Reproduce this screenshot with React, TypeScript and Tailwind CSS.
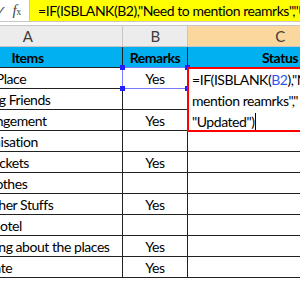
import React from 'react';

const font = { fontFamily: 'Lato, "Liberation Sans", sans-serif', letterSpacing: '-0.45px' };

const rows: { a: string; b: string }[] = [
  { a: 'Finalize the Place', b: 'Yes' },
  { a: 'Begin Inviting Friends', b: '' },
  { a: 'Money Arrangement', b: 'Yes' },
  { a: 'Travel Organisation', b: '' },
  { a: 'Book Ship Tickets', b: 'Yes' },
  { a: 'Buy New Clothes', b: '' },
  { a: 'Pack The Other Stuffs', b: 'Yes' },
  { a: 'Book Best Hotel', b: '' },
  { a: 'Begin Learning about the places', b: 'Yes' },
  { a: 'Fix Travel Date', b: 'Yes' },
];

const Handle = ({ className }: { className: string }) => (
  <span className={`absolute w-[5px] h-[5px] bg-[#1f1fff] ${className}`} />
);

export default function App() {
  return (
    <div className="w-[300px] h-[300px] overflow-hidden bg-white text-[14px] text-black" style={font}>
      {/* formula bar */}
      <div className="flex h-[22px] border-b border-[#c6c6c6]">
        <div className="w-[30px] flex items-center shrink-0 bg-white border-r border-[#c6c6c6]">
          <span className="text-[#555] text-[13px] -ml-[4px]">✓</span>
          <span className="ml-[6px] text-[#444] italic text-[15px] leading-none" style={{ fontFamily: '"Liberation Serif", serif' }}>
            f<span className="text-[10px] not-italic">x</span>
          </span>
        </div>
        <div className="flex-1 bg-[#ffff00] pl-[8px] flex items-center whitespace-nowrap">
          =IF(ISBLANK(B2),"Need to mention reamrks","Updated")
        </div>
      </div>

      <div className="h-[3px]" />

      {/* sheet */}
      <div className="-ml-[67px] grid grid-cols-[190px_65px_184px] border-t border-[#c6c6c6]">
        {/* column letters */}
        <div className="h-[21px] bg-[#ececec] border-r border-b border-[#c6c6c6] flex items-center justify-center text-[#3c3c3c] text-[15px]">A</div>
        <div className="h-[21px] bg-[#ececec] border-r border-b border-[#c6c6c6] flex items-center justify-center text-[#3c3c3c] text-[15px]">B</div>
        <div className="h-[21px] bg-[#fad79c] border-b border-[#c6c6c6] flex items-center justify-center text-[#3c3c3c] text-[15px]">C</div>

        {/* header row */}
        <div className="h-[21px] bg-[#00b0f0] border-r border-b border-[#222] flex items-center justify-center font-bold">Items</div>
        <div className="h-[21px] bg-[#00b0f0] border-r border-b border-[#222] flex items-center justify-center font-bold">Remarks</div>
        <div className="h-[21px] bg-[#00b0f0] border-b border-[#222] flex items-center justify-center font-bold">Status</div>

        {rows.map((r, i) => (
          <React.Fragment key={i}>
            <div className="h-[21px] border-r border-b border-[#222] flex items-center overflow-hidden whitespace-nowrap">
              <span className="-ml-[5px]">{r.a}</span>
            </div>
            <div className="relative h-[21px] border-r border-b border-[#222] flex items-center justify-center">
              {r.b}
              {i === 0 && (
                <div className="absolute -left-px -top-px w-[66px] h-[22px] border border-[#7b7bff]">
                  <Handle className="-left-[3px] -top-[3px]" />
                  <Handle className="-right-[3px] -top-[3px]" />
                  <Handle className="-left-[3px] -bottom-[3px]" />
                  <Handle className="-right-[3px] -bottom-[3px]" />
                </div>
              )}
            </div>
            <div className="relative h-[21px] border-b border-[#222]">
              {i === 0 && (
                <div className="absolute -left-px -top-px w-[200px] h-[65px] z-10 bg-white border-2 border-[#ff0000] pl-[3px] leading-[21px]">
                  <div className="whitespace-nowrap">
                    =IF(ISBLANK(<span className="text-[#2f55e8]">B2</span>),"Need to
                  </div>
                  <div className="whitespace-nowrap">mention reamrks","</div>
                  <div className="whitespace-nowrap flex items-center">
                    "Updated")<span className="inline-block w-px h-[17px] bg-black ml-[1px]" />
                  </div>
                </div>
              )}
            </div>
          </React.Fragment>
        ))}
      </div>
    </div>
  );
}
